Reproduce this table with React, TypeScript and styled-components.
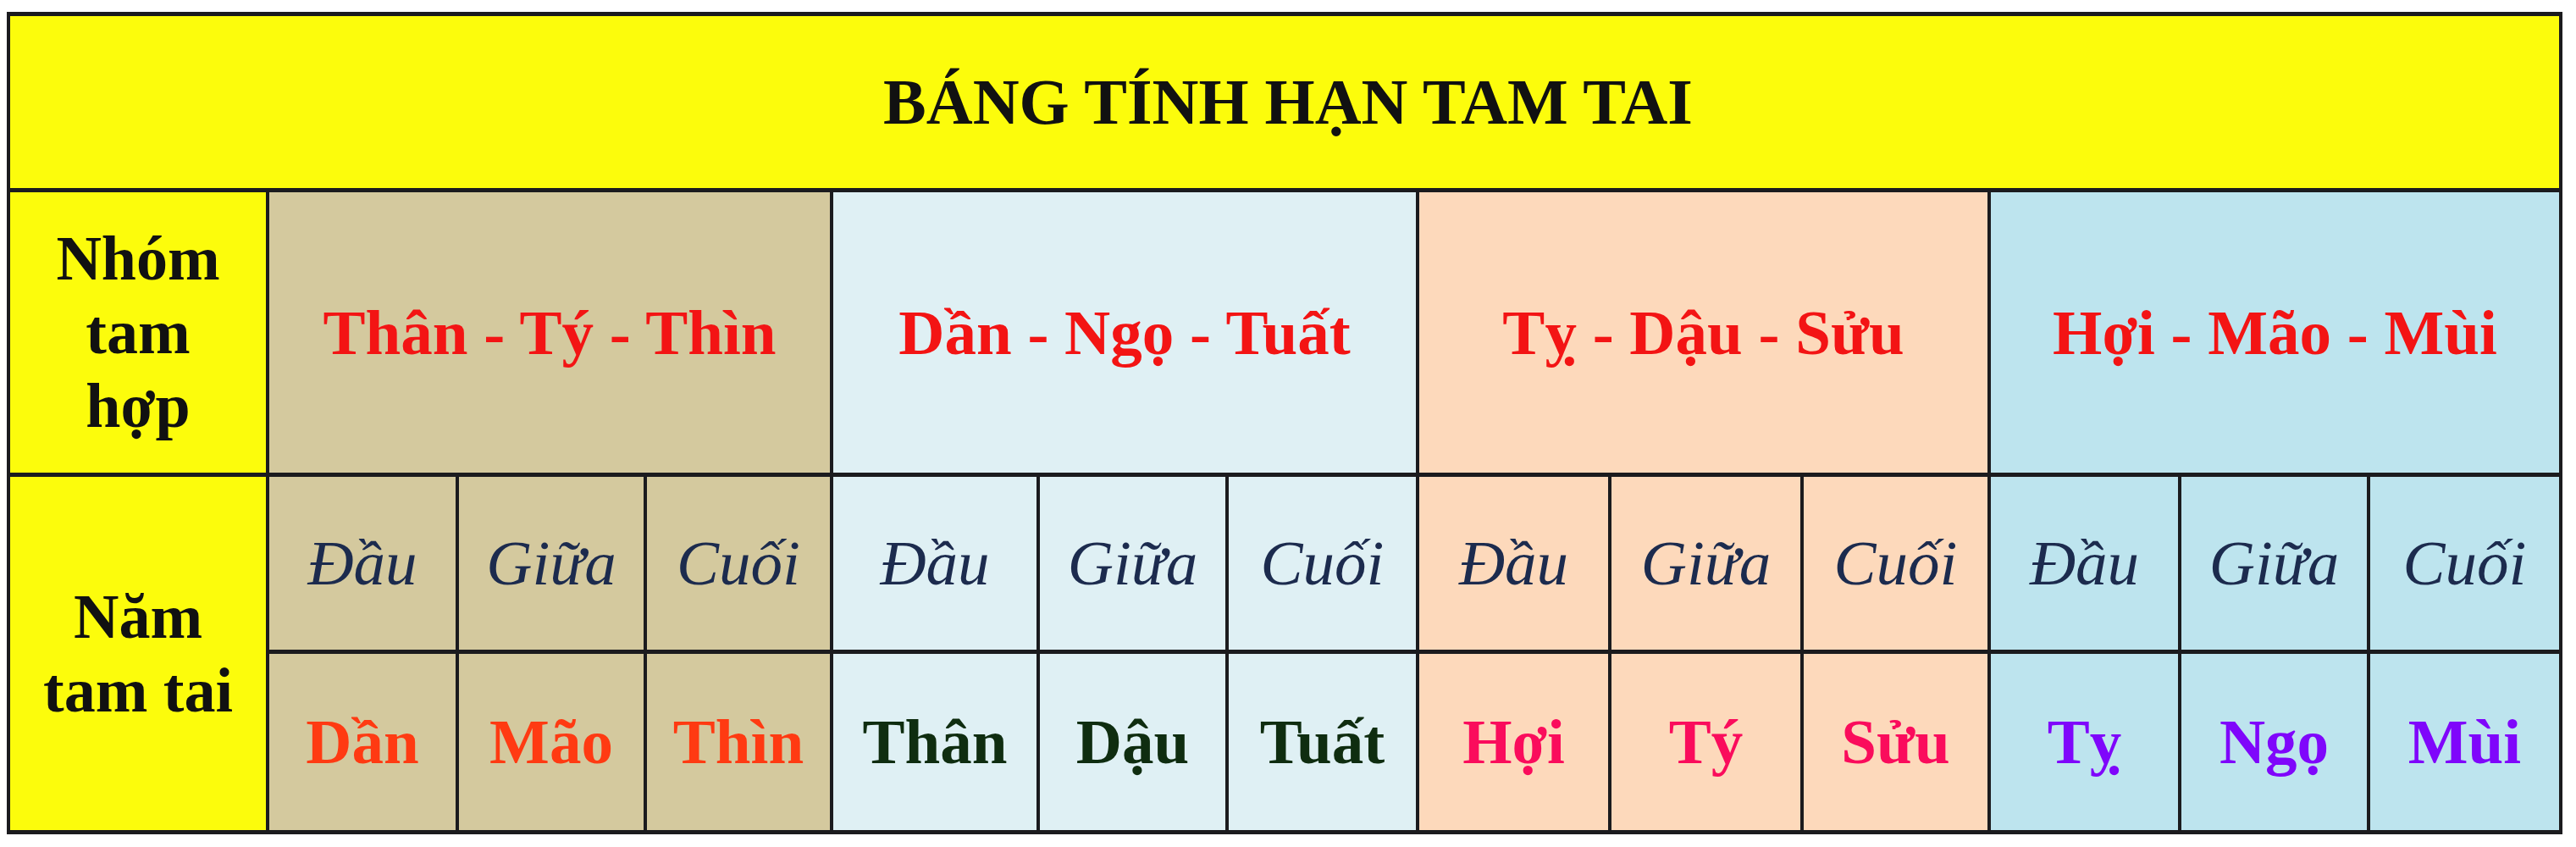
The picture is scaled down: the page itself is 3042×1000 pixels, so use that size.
import React from "react";
import styled, { createGlobalStyle } from "styled-components";

type Tone = "tan" | "mist" | "peach" | "sky";

const tones: Record<Tone, string> = {
  tan: "#d4c99e",
  mist: "#dff0f4",
  peach: "#fdd9bb",
  sky: "#bde4ee",
};

const groups: { name: string; tone: Tone; color: string; years: string[] }[] = [
  { name: "Thân - Tý - Thìn", tone: "tan", color: "#ff3a12", years: ["Dần", "Mão", "Thìn"] },
  { name: "Dần - Ngọ - Tuất", tone: "mist", color: "#0f2d10", years: ["Thân", "Dậu", "Tuất"] },
  { name: "Tỵ - Dậu - Sửu", tone: "peach", color: "#fa0c5c", years: ["Hợi", "Tý", "Sửu"] },
  { name: "Hợi - Mão - Mùi", tone: "sky", color: "#7f06fb", years: ["Tỵ", "Ngọ", "Mùi"] },
];

const phases = ["Đầu", "Giữa", "Cuối"];

const GlobalStyle = createGlobalStyle`
  body {
    margin: 0;
    background: #ffffff;
    font-family: "Liberation Serif", "Times New Roman", serif;
  }
`;

const Page = styled.div`
  padding: 14px 0 0 8px;
  width: 3042px;
  height: 1000px;
  box-sizing: border-box;
`;

const Table = styled.div`
  display: grid;
  grid-template-columns: 302px 220px 218px 216px 240px 219px 221px 223px 223px 217px 221px 219px 223px;
  grid-template-rows: 203px 331px 204px 208px;
  row-gap: 5px;
  column-gap: 4px;
  padding: 5px 4px;
  width: 3018px;
  box-sizing: border-box;
  background: #1b1b1e;
`;

const Cell = styled.div`
  display: flex;
  align-items: center;
  justify-content: center;
  text-align: center;
  font-size: 75px;
  line-height: 1.2;
`;

const TitleCell = styled(Cell)`
  grid-column: 1 / -1;
  background: #fcfc0c;
  color: #111;
  font-weight: 700;
  font-size: 76px;
  padding-left: 8px;
`;

const LabelCell = styled(Cell)<{ $rows: number }>`
  grid-row: span ${(p) => p.$rows};
  background: #fcfc0c;
  color: #111;
  font-weight: 700;
  font-size: 74px;
  line-height: 87px;
`;

const GroupCell = styled(Cell)<{ $tone: Tone }>`
  grid-column: span 3;
  background: ${(p) => tones[p.$tone]};
  color: #f31414;
  font-weight: 700;
`;

const PhaseCell = styled(Cell)<{ $tone: Tone }>`
  background: ${(p) => tones[p.$tone]};
  color: #1c2b4e;
  font-style: italic;
`;

const YearCell = styled(Cell)<{ $tone: Tone; $color: string }>`
  background: ${(p) => tones[p.$tone]};
  color: ${(p) => p.$color};
  font-weight: 700;
`;

export default function App() {
  return (
    <Page>
      <GlobalStyle />
      <Table>
        <TitleCell>BÁNG TÍNH HẠN TAM TAI</TitleCell>

        <LabelCell $rows={1}>
          Nhóm
          <br />
          tam
          <br />
          hợp
        </LabelCell>
        {groups.map((g) => (
          <GroupCell key={g.name} $tone={g.tone}>
            {g.name}
          </GroupCell>
        ))}

        <LabelCell $rows={2}>
          Năm
          <br />
          tam tai
        </LabelCell>
        {groups.map((g) =>
          phases.map((ph) => (
            <PhaseCell key={g.name + ph} $tone={g.tone}>
              {ph}
            </PhaseCell>
          ))
        )}
        {groups.map((g) =>
          g.years.map((y) => (
            <YearCell key={g.name + y} $tone={g.tone} $color={g.color}>
              {y}
            </YearCell>
          ))
        )}
      </Table>
    </Page>
  );
}
